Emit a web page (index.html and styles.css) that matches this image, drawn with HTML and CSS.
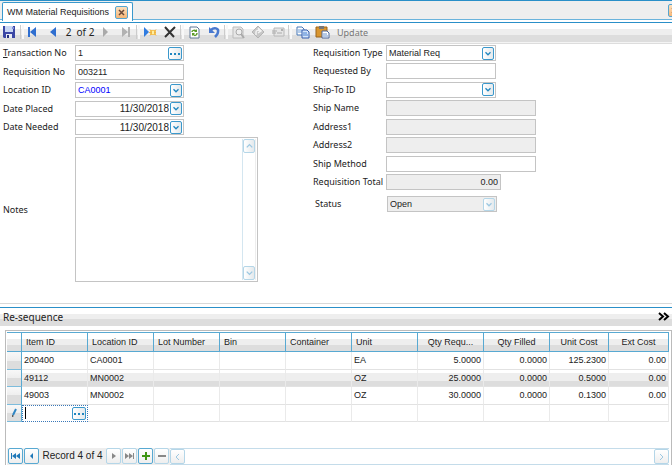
FILE: index.html
```html
<!DOCTYPE html>
<html lang="en">
<head>
    <meta charset="UTF-8">
    <meta name="viewport" content="width=device-width, initial-scale=1.0">
    <title>WM Material Requisitions</title>
    <link rel="stylesheet" href="styles.css">
</head>
<body>
    <!-- Shared glyphs -->
    <svg class="defs" width="0" height="0" aria-hidden="true">
        <symbol id="down" viewBox="0 0 12 13"><path d="M3 5l3 3 3-3" fill="none" stroke="currentColor" stroke-width="1.5"/></symbol>
        <symbol id="up" viewBox="0 0 12 13"><path d="M3 8l3-3 3 3" fill="none" stroke="currentColor" stroke-width="1.5"/></symbol>
        <symbol id="dots" viewBox="0 0 14 13"><path d="M2 6h2v2H2zM6 6h2v2H6zM10 6h2v2h-2z" fill="currentColor"/></symbol>
        <symbol id="close" viewBox="0 0 11 11"><path d="M3 3l5 5M8 3l-5 5" stroke="#6b4a3a" stroke-width="1.5"/></symbol>
    </svg>

    <div class="tabs">
        <div class="tab">
            <span>WM Material Requisitions</span>
            <button class="close" aria-label="Close tab"><svg width="11" height="11"><use href="#close"/></svg></button>
        </div>
        <button class="close close-all" aria-label="Close window"><svg width="11" height="11"><use href="#close"/></svg></button>
    </div>

    <div class="toolbar">
        <button class="tool" aria-label="Save">
            <svg width="20" height="16" viewBox="0 0 20 16"><path d="M3 2h12v12H4l-1-1z" fill="#3b47a5"/><path d="M5 2h8v6H5z" fill="#c9d6f4"/><path d="M12 3h2v2h-2z" fill="#8490d8"/><path d="M6 10h6v4H6z" fill="#e8ebf5"/><path d="M7 11h2v3H7z" fill="#26307d"/></svg>
        </button>
        <span class="sep"></span>
        <button class="tool" aria-label="First record">
            <svg width="20" height="16" viewBox="0 0 20 16"><path d="M4 3h2v10H4z" fill="#2f6fd0"/><path d="M12 3v10L6 8z" fill="#2f6fd0"/></svg>
        </button>
        <button class="tool" aria-label="Previous record">
            <svg width="20" height="16" viewBox="0 0 20 16"><path d="M12 3v10L6 8z" fill="#2f6fd0"/></svg>
        </button>
        <span class="count">2&nbsp; of 2</span>
        <button class="tool" aria-label="Next record">
            <svg width="20" height="16" viewBox="0 0 20 16"><path d="M7 3v10l5-5z" fill="#aaa"/></svg>
        </button>
        <button class="tool" aria-label="Last record">
            <svg width="20" height="16" viewBox="0 0 20 16"><path d="M6 3v10l6-5zM12 3h2v10h-2z" fill="#b2b2b2"/></svg>
        </button>
        <span class="sep"></span>
        <button class="tool" aria-label="New record">
            <svg width="20" height="16" viewBox="0 0 20 16"><path d="M4 3v10l5-5z" fill="#2f7be0"/><path d="M10 6h6v5h-6z" fill="#f6c65a"/><path d="M9 8.500h7M10 5.500l6 6M16 5.500l-6 6" stroke="#edb246" stroke-width="1"/><path d="M12 7h2v3h-2z" fill="#fff0a0"/></svg>
        </button>
        <button class="tool" aria-label="Delete record">
            <svg width="20" height="16" viewBox="0 0 20 16"><path d="M5 3l9 10M15 3L5 13" fill="none" stroke="#333" stroke-width="2"/></svg>
        </button>
        <span class="sep"></span>
        <button class="tool" aria-label="Refresh">
            <svg width="20" height="16" viewBox="0 0 20 16"><path d="M6 3h7l2 2v9H6z" fill="#fff" stroke="#5f7694"/><path d="M8 8c0-2 3-2 4-1M13 9c0 3-3 3-4 1" fill="none" stroke="#5a9a27" stroke-width="1.500"/><path d="M13 5v3h-3zM8 12V9h3z" fill="#5a9a27"/></svg>
        </button>
        <button class="tool" aria-label="Undo">
            <svg width="20" height="16" viewBox="0 0 20 16"><path d="M7 6c3-3 8-2 7 2 0 2-1 3-3 5" fill="none" stroke="#4979cf" stroke-width="2.500"/><path d="M5 3v6h6z" fill="#4979cf"/></svg>
        </button>
        <span class="sep"></span>
        <button class="tool" aria-label="Print preview">
            <svg width="20" height="16" viewBox="0 0 20 16"><path d="M5 3h8l2 2v9H5z" fill="#e6e6e6" stroke="#bbb"/><circle cx="11" cy="8" r="3" fill="#eee" stroke="#aaa"/><path d="M13 10l3 4" stroke="#aaa" stroke-width="2"/></svg>
        </button>
        <button class="tool" aria-label="Send">
            <svg width="20" height="16" viewBox="0 0 20 16"><path d="M10 2l6 6-6 6-6-6z" fill="#c7c7c7" stroke="#b5b5b5"/><path d="M8 11V8c0-2 3-2 4-1M10 4l3 3-3 2" fill="none" stroke="#f4f4f4" stroke-width="1.500"/></svg>
        </button>
        <button class="tool" aria-label="Attach">
            <svg width="20" height="16" viewBox="0 0 20 16"><path d="M6 4h10v8H6z" fill="#e6e6e6" stroke="#b8b8b8"/><path d="M4 7h5M4 9h4M9 9h5" stroke="#aaa"/><path d="M13 5h2v2h-2z" fill="#b0b0b0"/></svg>
        </button>
        <span class="sep"></span>
        <button class="tool" aria-label="Copy">
            <svg width="20" height="16" viewBox="0 0 20 16"><path d="M5 3h5l2 2v6H5z" fill="#fff" stroke="#4778b8"/><path d="M6 6h4M6 8h4" stroke="#6b9bd8"/><path d="M10 6h5l2 2v6h-7z" fill="#d5e5fa" stroke="#365fae"/><path d="M11 9h4M11 11h5" stroke="#4a82d0"/></svg>
        </button>
        <button class="tool" aria-label="Paste">
            <svg width="20" height="16" viewBox="0 0 20 16"><path d="M4 3h11v10H4z" fill="#d9962f" stroke="#99641f"/><path d="M7 2h5v3H7z" fill="#777"/><path d="M10 7h5l2 2v5h-7z" fill="#fff" stroke="#4a679d"/><path d="M11 10h4M11 12h5" stroke="#6b94d0"/></svg>
        </button>
        <button class="update">Update</button>
    </div>

    <form class="form">
        <div class="left">
            <div class="rows rows-left">
                <div class="row">
                    <label for="trans"><u>T</u>ransaction No</label>
                    <div class="field"><input id="trans" value="1"><button type="button" class="drop wide" aria-label="Find transaction"><svg width="12" height="11" viewBox="1 1 12 11"><use href="#dots" width="14" height="13"/></svg></button></div>
                </div>
                <div class="row">
                    <label for="reqno">Requisition No</label>
                    <div class="field"><input id="reqno" value="003211"></div>
                </div>
                <div class="row">
                    <label for="loc">Location ID</label>
                    <div class="field"><select id="loc" class="link"><option>CA0001</option></select><span class="drop"><svg width="10" height="11"><use href="#down"/></svg></span></div>
                </div>
                <div class="row">
                    <label for="placed">Date Placed</label>
                    <div class="field"><input id="placed" class="num date" value="11/30/2018"><button type="button" class="drop" aria-label="Pick date placed"><svg width="10" height="11"><use href="#down"/></svg></button></div>
                </div>
                <div class="row">
                    <label for="needed">Date Needed</label>
                    <div class="field"><input id="needed" class="num date" value="11/30/2018"><button type="button" class="drop" aria-label="Pick date needed"><svg width="10" height="11"><use href="#down"/></svg></button></div>
                </div>
            </div>
            <div class="row">
                <label for="notes">Notes</label>
                <div class="field notes">
                    <textarea id="notes"></textarea>
                    <div class="scroll">
                        <button type="button" class="drop faded" aria-label="Scroll up"><svg width="11" height="12"><use href="#up"/></svg></button>
                        <button type="button" class="drop faded" aria-label="Scroll down"><svg width="11" height="12"><use href="#down"/></svg></button>
                    </div>
                </div>
            </div>
        </div>

        <div class="right">
            <div class="rows rows-right">
                <div class="row">
                    <label for="type">Requisition Type</label>
                    <div class="field"><select id="type"><option>Material Req</option></select><span class="drop"><svg width="10" height="11"><use href="#down"/></svg></span></div>
                </div>
                <div class="row">
                    <label for="by">Requested By</label>
                    <div class="field"><input id="by"></div>
                </div>
                <div class="row">
                    <label for="shipto">Ship-To ID</label>
                    <div class="field"><select id="shipto"><option></option></select><span class="drop"><svg width="10" height="11"><use href="#down"/></svg></span></div>
                </div>
                <div class="row">
                    <label for="shipname">Ship Name</label>
                    <div class="field long off"><input id="shipname" readonly></div>
                </div>
                <div class="row">
                    <label for="addr1">Address1</label>
                    <div class="field long off"><input id="addr1" readonly></div>
                </div>
                <div class="row">
                    <label for="addr2">Address2</label>
                    <div class="field long off"><input id="addr2" readonly></div>
                </div>
                <div class="row">
                    <label for="method">Ship Method</label>
                    <div class="field long"><input id="method"></div>
                </div>
                <div class="row">
                    <label for="total">Requisition Total</label>
                    <div class="field total off"><input id="total" class="num" value="0.00" readonly></div>
                </div>
            </div>
            <div class="row status">
                <label for="status">Status</label>
                <div class="field off"><select id="status"><option>Open</option></select><span class="drop faded"><svg width="10" height="11"><use href="#down"/></svg></span></div>
            </div>
        </div>
    </form>

    <div class="section">
        <span>Re-sequence</span>
        <button class="more" aria-label="More"><svg width="12" height="9" viewBox="0 0 12 9"><path d="M1 1l4 3.500L1 8M6 1l4 3.500L6 8" fill="none" stroke="#000" stroke-width="2"/></svg></button>
    </div>

    <div class="grid">
        <table>
            <colgroup>
                <col class="c-mark"><col class="c-text"><col class="c-text"><col class="c-text"><col class="c-text"><col class="c-text"><col class="c-text"><col class="c-text"><col class="c-text"><col class="c-cost"><col>
            </colgroup>
            <thead>
                <tr><th></th><th>Item ID</th><th>Location ID</th><th>Lot Number</th><th>Bin</th><th>Container</th><th>Unit</th><th class="mid">Qty Requ...</th><th class="mid">Qty Filled</th><th class="mid">Unit Cost</th><th class="mid">Ext Cost</th></tr>
            </thead>
            <tbody>
                <tr><td class="mark"></td><td>200400</td><td>CA0001</td><td></td><td></td><td></td><td>EA</td><td class="num">5.0000</td><td class="num">0.0000</td><td class="num">125.2300</td><td class="num">0.00</td></tr>
                <tr class="alt"><td class="mark"></td><td>49112</td><td>MN0002</td><td></td><td></td><td></td><td>OZ</td><td class="num">25.0000</td><td class="num">0.0000</td><td class="num">0.5000</td><td class="num">0.00</td></tr>
                <tr><td class="mark"></td><td>49003</td><td>MN0002</td><td></td><td></td><td></td><td>OZ</td><td class="num">30.0000</td><td class="num">0.0000</td><td class="num">0.1300</td><td class="num">0.00</td></tr>
                <tr>
                    <td class="mark"><svg width="8" height="10" viewBox="0 0 8 10"><path d="M6 1L3 7" stroke="#2f86c4" stroke-width="2"/><path d="M2 7l2 1-2 1z" fill="#333"/></svg></td>
                    <td class="edit"><div class="editor"><span class="caret"></span><input aria-label="Item ID"><button class="drop wide" aria-label="Find item"><svg width="12" height="11" viewBox="1 1 12 11"><use href="#dots" width="14" height="13"/></svg></button></div></td>
                    <td></td><td></td><td></td><td></td><td></td><td></td><td></td><td></td><td></td>
                </tr>
            </tbody>
        </table>
        <div class="nav">
            <button class="navbtn" aria-label="First"><svg width="13" height="14" viewBox="0 0 13 14"><path d="M2 4h1v6H2zM7 4v6L3 7zM11 4v6L7 7z" fill="#1f78b8"/></svg></button>
            <button class="navbtn" aria-label="Previous"><svg width="13" height="14" viewBox="0 0 13 14"><path d="M8 4v6L5 7z" fill="#1f78b8"/></svg></button>
            <span class="record">Record 4 of 4</span>
            <button class="navbtn faded" aria-label="Next"><svg width="13" height="14" viewBox="0 0 13 14"><path d="M5 4v6l4-3z" fill="#888"/></svg></button>
            <button class="navbtn faded" aria-label="Last"><svg width="13" height="14" viewBox="0 0 13 14"><path d="M2 4v6l4-3zM6 4v6l4-3zM10 4h1v6h-1z" fill="#888"/></svg></button>
            <button class="navbtn" aria-label="Add"><svg width="13" height="14" viewBox="0 0 13 14"><path d="M3 7h8M7 3v8" stroke="#3f9614" stroke-width="2"/></svg></button>
            <button class="navbtn faded" aria-label="Remove"><svg width="13" height="14" viewBox="0 0 13 14"><path d="M3 7h8" stroke="#888" stroke-width="2"/></svg></button>
            <div class="track">
                <button class="navbtn faded" aria-label="Scroll left"><svg width="13" height="14" viewBox="0 0 13 14"><path d="M8 4L5 7l3 3" fill="none" stroke="#9cc8e2"/></svg></button>
                <button class="navbtn faded" aria-label="Scroll right"><svg width="13" height="14" viewBox="0 0 13 14"><path d="M5 4l3 3-3 3" fill="none" stroke="#9cc8e2"/></svg></button>
            </div>
        </div>
    </div>
</body>
</html>
```

FILE: styles.css
```css
* {
    box-sizing: border-box;
}
body {
    margin: 0;
    min-height: 100vh;
    display: flex;
    flex-direction: column;
    overflow-x: hidden;
    background: #fff;
    color: #222;
    font-family: "Noto Sans", Tahoma, sans-serif;
    font-size: 9px;
    line-height: 14px;
}
button, input, select, textarea {
    margin: 0;
    padding: 0;
    border: none;
    border-radius: 0;
    background: none;
    color: inherit;
    font-family: "Liberation Sans", Arial, sans-serif;
    font-size: 9px;
    outline: none;
}
svg {
    display: block;
    flex: none;
}
.defs {
    position: absolute;
}

/* Tab strip */
.tabs {
    display: flex;
    justify-content: space-between;
    height: 23px;
    padding-left: 2px;
    border-top: 1px solid #2a8fc8;
    border-bottom: 1px solid #2a8fc8;
    background: linear-gradient(#eee 18px, #6ab3dc 18px, #6ab3dc 19px, #fff 19px);
    overflow: hidden;
}
.tab {
    display: flex;
    align-items: center;
    gap: 6px;
    height: 19px;
    margin-top: 1px;
    padding: 0 4px;
    border: 1px solid #3a98cc;
    border-bottom: none;
    border-radius: 2px 2px 0 0;
    background: #fff;
    font-family: "Liberation Sans", Arial, sans-serif;
}
.close {
    display: flex;
    border: 1px solid #55a5d0;
    border-radius: 2px;
    background: linear-gradient(#fde0bd, #f6b677);
}
.close-all {
    align-self: flex-start;
    margin: 3px -9px 0 0;
}

/* Toolbar */
.toolbar {
    display: flex;
    align-items: center;
    height: 21px;
    padding-bottom: 2px;
    border-bottom: 1px solid #ddd;
    background: linear-gradient(#fff 6px, #eee 6px, #eee 12px, #ddd 12px, #ddd 19px, #f4f4f4 19px);
}
.tool {
    width: 20px;
    height: 16px;
}
.sep {
    width: 4px;
    height: 14px;
    border-left: 1px solid #ccc;
    border-right: 2px solid #f8f8f8;
}
.count {
    width: 32px;
    text-align: center;
    font-size: 10px;
}
.update {
    margin-left: 5px;
    color: #777;
    font-family: inherit;
}

/* Requisition form */
.form {
    display: flex;
    height: 260px;
    flex: none;
    padding: 1px 0 0 3px;
    border-bottom: 1px solid #d8d8d8;
}
.left {
    width: 310px;
}
.rows {
    display: flex;
    flex-direction: column;
    justify-content: space-between;
}
.rows-left {
    height: 90px;
    margin-bottom: 2px;
}
.rows-right {
    height: 145px;
    margin-bottom: 6px;
}
.row {
    display: flex;
    align-items: center;
}
.row label {
    width: 72px;
    white-space: nowrap;
}
.right .row label {
    width: 73px;
}
.field {
    display: flex;
    align-items: center;
    width: 109px;
    height: 16px;
    padding: 0 1px;
    border: 1px solid #c4c4c4;
    background: #fff;
}
.field input, .field select {
    flex: 1;
    min-width: 0;
    height: 14px;
    padding: 0 1px;
    appearance: none;
}
.field .num {
    text-align: right;
}
.field .date {
    font-size: 10px;
}
.field .link {
    color: #00f;
}
.right .field {
    width: 110px;
}
.right .long {
    width: 150px;
}
.right .total {
    width: 115px;
}
.field.off {
    background: #eee;
}
.right .status {
    padding-left: 2px;
}
.right .status label {
    width: 72px;
}
.drop {
    display: flex;
    align-items: center;
    justify-content: center;
    flex: none;
    width: 12px;
    height: 13px;
    border: 1px solid #3a98cc;
    border-radius: 2px;
    background: linear-gradient(90deg, #fff, #e4e9ec);
    color: #1f86c0;
}
.drop.wide {
    width: 14px;
}
.drop.faded {
    border-color: #b4d6e8;
    color: #9cc8e2;
}
.field.notes {
    width: 183px;
    height: 145px;
    align-items: stretch;
    padding: 1px;
}
.notes textarea {
    flex: 1;
    min-width: 0;
    resize: none;
}
.scroll {
    display: flex;
    flex-direction: column;
    justify-content: space-between;
    width: 14px;
    border-left: 1px solid #d4e6f0;
    border-right: 1px solid #eee;
}
.scroll .drop {
    height: 14px;
}

/* Line items */
.section {
    display: flex;
    align-items: center;
    justify-content: space-between;
    height: 19px;
    margin-top: 3px;
    padding: 0 2px 0 3px;
    border-top: 1px solid #2a8fc8;
    border-bottom: 1px solid #ddd;
    background: linear-gradient(#fff 6px, #eee 6px, #eee 11px, #ddd 11px);
    font-size: 10px;
}
.grid {
    flex: 1;
    display: flex;
    flex-direction: column;
    justify-content: space-between;
    margin: 4px 0 0 5px;
    padding: 1px 2px 0 1px;
    border: 1px solid #bbb;
    border-bottom: none;
}
table {
    width: 100%;
    height: 90px;
    table-layout: fixed;
    border-collapse: separate;
    border-spacing: 0;
    font-family: "Liberation Sans", Arial, sans-serif;
    font-size: 9px;
    line-height: 12px;
}
.c-mark {
    width: 15px;
}
.c-text {
    width: 66px;
}
.c-cost {
    width: 59px;
}
th {
    height: 20px;
    padding: 0 4px;
    border: solid #58a9d2;
    border-width: 1px 1px 1px 0;
    background: linear-gradient(#fff 6px, #eee 6px, #eee 12px, #ddd 12px);
    font-weight: normal;
    text-align: left;
    white-space: nowrap;
}
th.mid {
    text-align: center;
}
td {
    height: 17px;
    padding: 0 2px;
    border-right: 1px solid #eaeaea;
    border-bottom: 1px solid #e2e2e2;
    white-space: nowrap;
}
td.num {
    text-align: right;
}
.alt td {
    background: linear-gradient(#fff 3px, #eee 3px, #eee 11px, #ddd 11px);
}
td.mark, .alt td.mark {
    border-right-color: #58a9d2;
    border-bottom-color: #7dbcdc;
    background: linear-gradient(#f8f8f8, #eee 50%, #ddd 50%);
}
.mark svg {
    margin: 0 auto;
}
td.edit {
    padding: 0;
    border: 1px dotted #3a78b8;
}
.editor {
    display: flex;
    align-items: center;
    height: 15px;
    padding: 0 1px 0 2px;
}
.editor input {
    flex: 1;
    min-width: 0;
    height: 13px;
}
.caret {
    width: 1px;
    height: 12px;
    background: #000;
}
.nav {
    display: flex;
    gap: 1px;
    height: 17px;
    padding-left: 1px;
    background: #eee;
}
.navbtn {
    display: flex;
    align-items: center;
    justify-content: center;
    width: 15px;
    height: 16px;
    border: 1px solid #58a9d2;
    border-radius: 2px;
    background: linear-gradient(#fff, #eee);
}
.navbtn.faded {
    border-color: #b4d6e8;
}
.record {
    width: 65px;
    text-align: center;
    font-family: "Liberation Sans", Arial, sans-serif;
    font-size: 10px;
    line-height: 16px;
    white-space: nowrap;
}
.track {
    flex: 1;
    display: flex;
    justify-content: space-between;
    border: solid #c4dcea;
    border-width: 1px 0;
    background: #fff;
}
.track .navbtn {
    height: 15px;
}
```
